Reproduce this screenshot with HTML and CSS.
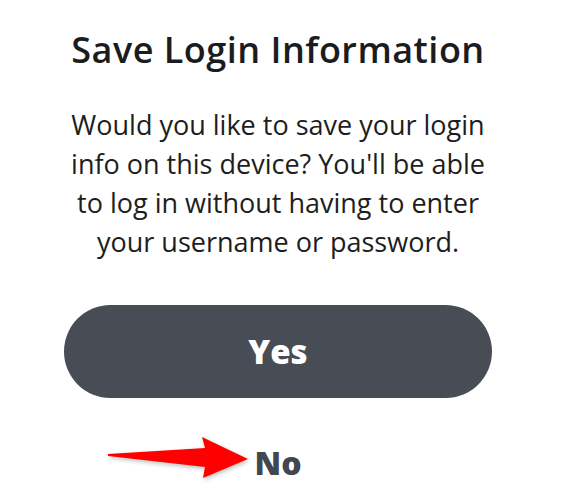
FILE: index.html
```html
<!DOCTYPE html>
<html lang="en">
<head>
<meta charset="utf-8">
<title>Save Login Information</title>
<link rel="stylesheet" href="styles.css">
</head>
<body>
<main class="dialog">
  <h1 class="title">Save Login Information</h1>
  <p class="message">Would you like to save your login<br>info on this device? You'll be able<br>to log in without having to enter<br>your username or password.</p>
  <button class="btn-yes" type="button">Yes</button>
  <div class="no-row">
    <svg class="arrow" width="146" height="48" viewBox="0 0 146 48" aria-hidden="true">
      <polygon points="3,19 100,13 97,2 143,24 98,43 100,32 3,21" fill="#ff0000"/>
    </svg>
    <span class="btn-no">No</span>
  </div>
</main>
</body>
</html>
```

FILE: styles.css
```css
html, body {
  margin: 0;
  padding: 0;
  background: #ffffff;
}

body {
  width: 556px;
  height: 500px;
  overflow: hidden;
  font-family: "Open Sans", "Liberation Sans", sans-serif;
}

.dialog {
  display: flex;
  flex-direction: column;
  align-items: center;
  padding-top: 26px;
}

.title {
  margin: 0;
  font-size: 36px;
  line-height: 48px;
  font-weight: 600;
  letter-spacing: 0.5px;
  color: #1b1c1e;
  text-align: center;
  white-space: nowrap;
}

.message {
  margin: 31px 0 0;
  font-size: 27px;
  line-height: 39px;
  font-weight: 400;
  color: #1d1e20;
  text-align: center;
  white-space: nowrap;
}

.btn-yes {
  margin-top: 44px;
  width: 428px;
  height: 93px;
  border: none;
  border-radius: 47px;
  background: #474c55;
  color: #ffffff;
  font-family: inherit;
  font-size: 33px;
  font-weight: 800;
  padding: 0;
}

.no-row {
  position: relative;
  margin-top: 45px;
  height: 40px;
  display: flex;
  justify-content: center;
}

.btn-no {
  font-size: 32px;
  line-height: 40px;
  font-weight: 800;
  color: #42464f;
}

.arrow {
  position: absolute;
  left: -149px;
  top: -8px;
  filter: drop-shadow(1px 2px 2px rgba(0,0,0,0.25));
}
```
